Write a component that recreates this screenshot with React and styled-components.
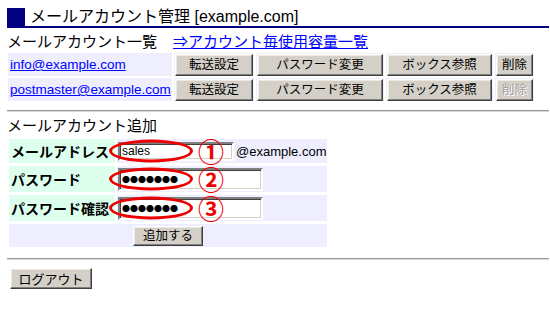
import { Fragment } from "react";
import styled, { createGlobalStyle } from "styled-components";

const GlobalStyle = createGlobalStyle`
  body {
    margin: 0;
    background: #ffffff;
    color: #000000;
    font-family: "Liberation Sans", "Noto Sans CJK JP", sans-serif;
  }
`;

const Page = styled.div`
  width: 542px;
  padding: 8px 1px 0 7px;
`;

const Title = styled.h1`
  margin: 0;
  height: 18px;
  display: flex;
  align-items: center;
  gap: 5px;
  border-bottom: 2px solid #000080;
  font-size: 16px;
  font-weight: normal;
  line-height: 18px;
  white-space: pre;
  &::before {
    content: "";
    width: 18px;
    height: 18px;
    background: #000080;
  }
`;

const Heading = styled.h2`
  margin: ${(p) => p.$top}px 0 0;
  height: 20px;
  display: flex;
  align-items: center;
  gap: 16px;
  font-size: 15px;
  font-weight: normal;
  line-height: 20px;
`;

const Link = styled.a`
  color: #0000ff;
  text-decoration: underline;
  font-size: ${(p) => p.$size || 15}px;
`;

const AccountList = styled.div`
  margin: 1px 0 0 1px;
  display: grid;
  grid-template-columns: 164px 80px 128px 107px 39px;
  grid-auto-rows: 23px;
  gap: 2px;
`;

const Cell = styled.div`
  background: #eeeeff;
  display: flex;
  align-items: center;
  padding: 0 1px;
`;

const EmailCell = styled(Cell)`
  padding-left: 2px;
`;

const Button = styled.button`
  box-sizing: border-box;
  width: ${(p) => p.$w}px;
  height: ${(p) => p.$h || 22}px;
  padding: 0;
  background: #d4d0c8;
  border: 1px solid;
  border-color: #ffffff #404040 #404040 #ffffff;
  box-shadow: inset -1px -1px #808080, inset 1px 1px #ece9e2;
  font-family: "Noto Sans CJK JP", sans-serif;
  font-size: 12.5px;
  line-height: 1;
  color: #000000;
  &:disabled {
    color: #a0a0a0;
    text-shadow: 1px 1px #ffffff;
  }
`;

const Rule = styled.hr`
  margin: ${(p) => p.$top}px 0 0;
  height: 0;
  border: 0;
  border-top: 1px solid #9a9a9a;
  border-bottom: 1px solid #d8d8d8;
`;

const AddForm = styled.div`
  width: 318px;
  margin: 3px 0 0 2px;
  display: grid;
  grid-template-columns: 106px 210px;
  grid-template-rows: 24px 26px 26px 23px;
  column-gap: 2px;
  row-gap: 3px;
`;

const Label = styled.div`
  background: #ddffee;
  display: flex;
  align-items: center;
  padding-left: 2px;
  font-family: "Noto Sans CJK JP", sans-serif;
  font-size: 14px;
  font-weight: bold;
  white-space: nowrap;
`;

const Field = styled.div`
  position: relative;
  background: #eeeeff;
  display: flex;
  align-items: center;
  gap: 2px;
  padding-left: 1px;
  font-size: 13px;
`;

const SubmitRow = styled.div`
  grid-column: 1 / -1;
  background: #eeeeff;
  display: flex;
  justify-content: center;
  align-items: center;
`;

const TextInput = styled.input`
  box-sizing: border-box;
  width: ${(p) => p.$w}px;
  height: ${(p) => p.$h}px;
  padding: 0 2px;
  border: 2px solid;
  border-color: #808080 #ffffff #ffffff #808080;
  box-shadow: inset 1px 1px #404040, inset -1px -1px #d4d0c8;
  background: #ffffff;
  outline: none;
  font-family: ${(p) => (p.$dots ? '"Noto Sans CJK JP", sans-serif' : '"Liberation Sans", sans-serif')};
  font-size: ${(p) => (p.$dots ? 8 : 12)}px;
  color: #000000;
`;

const Mark = styled.div`
  position: absolute;
  left: -8px;
  top: 50%;
  transform: translateY(-50%);
  width: 84px;
  height: 23px;
  box-sizing: border-box;
  border: 3px solid #ee0000;
  border-radius: 50%;
  pointer-events: none;
`;

const Num = styled.span`
  position: absolute;
  left: 81px;
  top: 50%;
  transform: translateY(-50%);
  width: 26px;
  height: 24px;
  display: flex;
  align-items: center;
  justify-content: center;
  color: #ee0000;
  font-family: "Noto Sans CJK JP", sans-serif;
  font-size: 26px;
  font-weight: bold;
  line-height: 24px;
`;

const Logout = styled(Button)`
  margin: 8px 0 0 3px;
  font-size: 13px;
`;

const accounts = [
  { mail: "info@example.com", canDelete: true },
  { mail: "postmaster@example.com", canDelete: false },
];

const App = () => {
  return (
    <Page>
      <GlobalStyle />
      <Title>メールアカウント管理 [example.com]</Title>

      <Heading $top={4}>
        メールアカウント一覧
        <Link href="#">⇒アカウント毎使用容量一覧</Link>
      </Heading>

      <AccountList>
        {accounts.map((a) => (
          <Fragment key={a.mail}>
            <EmailCell>
              <Link href="#" $size={13.5}>{a.mail}</Link>
            </EmailCell>
            <Cell><Button $w={78}>転送設定</Button></Cell>
            <Cell><Button $w={126}>パスワード変更</Button></Cell>
            <Cell><Button $w={105}>ボックス参照</Button></Cell>
            <Cell><Button $w={37} disabled={!a.canDelete}>削除</Button></Cell>
          </Fragment>
        ))}
      </AccountList>

      <Rule $top={9} />

      <Heading $top={4}>メールアカウント追加</Heading>

      <AddForm>
        <Label>メールアドレス</Label>
        <Field>
          <TextInput $w={116} $h={19} defaultValue="sales" />
          @example.com
          <Mark />
          <Num>①</Num>
        </Field>

        <Label>パスワード</Label>
        <Field>
          <TextInput $w={145} $h={23} $dots defaultValue="●●●●●●●" />
          <Mark />
          <Num>②</Num>
        </Field>

        <Label>パスワード確認</Label>
        <Field>
          <TextInput $w={145} $h={23} $dots defaultValue="●●●●●●●" />
          <Mark />
          <Num>③</Num>
        </Field>

        <SubmitRow>
          <Button $w={70} $h={20}>追加する</Button>
        </SubmitRow>
      </AddForm>

      <Rule $top={11} />

      <Logout $w={82} $h={21}>ログアウト</Logout>
    </Page>
  );
};

export default App;
